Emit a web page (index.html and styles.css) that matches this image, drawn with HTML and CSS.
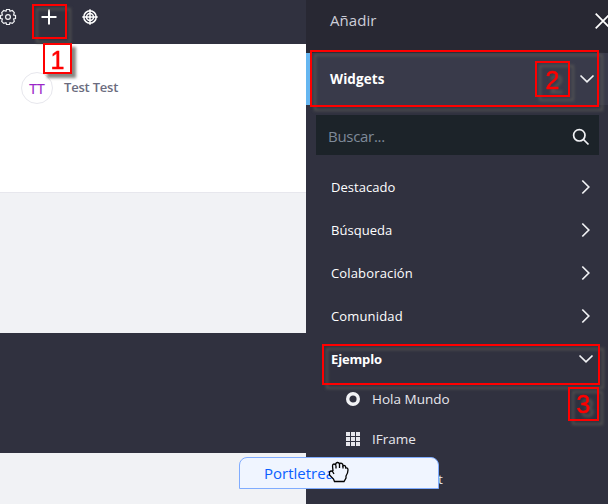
FILE: index.html
```html
<!DOCTYPE html>
<html lang="es">
<head>
<meta charset="utf-8">
<title>Añadir</title>
<link rel="stylesheet" href="styles.css">
</head>
<body>
<div class="app">
  <main class="page">
    <nav class="topbar">
      <svg class="gear" width="18" height="18" viewBox="0 0 18 18"><path d="M7.500 1.500H10.500L11 3.200L13.300 2.500L15.300 4.700L14.600 7L16.500 7.500V10.500L14.600 11L15.300 13.300L13.300 15.300L11 14.700L10.500 16.500H7.500L7 14.700L4.700 15.300L2.700 13.300L3.400 11L1.500 10.500V7.500L3.400 7L2.700 4.700L4.700 2.500L7 3.200Z"/><circle cx="9" cy="9" r="2.4"/></svg>
      <svg class="plus" width="16" height="16" viewBox="0 0 16 16"><path d="M8 .5V15.5M.5 8H15.500"/></svg>
      <svg class="target" width="16" height="16" viewBox="0 0 16 16"><circle cx="8" cy="8" r="6.200"/><circle cx="8" cy="8" r="3.500"/><path d="M8 .3V15.700M.3 8H15.700"/></svg>
    </nav>
    <section class="profile">
      <span class="avatar">TT</span>
      <span class="name">Test Test</span>
    </section>
    <section class="content"></section>
    <section class="band"></section>
    <section class="content-end"></section>
  </main>
  <aside class="sidebar">
    <header class="head"><span>Añadir</span><svg width="16" height="16" viewBox="0 0 16 16"><path d="M.7 .7L15.300 15.300M15.300 .7L.7 15.300"/></svg></header>
    <div class="widgets"><span>Widgets</span><svg width="16" height="16" viewBox="0 0 16 16"><path d="M1.500 4.500L8 10.800L14.500 4.500"/></svg></div>
    <div class="search"><span>Buscar...</span><svg width="18" height="18" viewBox="0 0 18 18"><circle cx="7.300" cy="7.300" r="5.700"/><path d="M11.500 11.500L16.500 16.500"/></svg></div>
    <ul class="cats">
      <li><span>Destacado</span><svg width="16" height="16" viewBox="0 0 16 16"><path d="M4.300 1.500L10.800 8L4.300 14.500"/></svg></li>
      <li><span>Búsqueda</span><svg width="16" height="16" viewBox="0 0 16 16"><path d="M4.300 1.500L10.800 8L4.300 14.500"/></svg></li>
      <li><span class="wide">Colaboración</span><svg width="16" height="16" viewBox="0 0 16 16"><path d="M4.300 1.500L10.800 8L4.300 14.500"/></svg></li>
      <li><span class="wide">Comunidad</span><svg width="16" height="16" viewBox="0 0 16 16"><path d="M4.300 1.500L10.800 8L4.300 14.500"/></svg></li>
      <li class="open"><span>Ejemplo</span><svg width="16" height="16" viewBox="0 0 16 16"><path d="M1.500 4.500L8 10.800L14.500 4.500"/></svg></li>
    </ul>
    <ul class="items">
      <li><svg width="14" height="14" viewBox="0 0 14 14"><circle class="ring" cx="7" cy="7" r="5.300"/></svg><span>Hola Mundo</span></li>
      <li><svg class="grid" width="14" height="14" viewBox="0 0 14 14"><path d="M0 0h4v4H0zM5 0h4v4H5zM10 0h4v4h-4zM0 5h4v4H0zM5 5h4v4H5zM10 5h4v4h-4zM0 10h4v4H0zM5 10h4v4H5zM10 10h4v4h-4z"/></svg><span>IFrame</span></li>
      <li class="last"><span>t</span></li>
    </ul>
  </aside>
  <div class="drag">Portletrea</div>
  <svg class="hand" width="22" height="22" viewBox="0 0 22 22"><path d="M5 10L4.500 5Q4.500 3 6 3Q7.300 3 7.800 4.500Q7.300 1.800 9.300 1.500Q11 1.300 11.500 3Q12 1.800 13.700 2.300Q15 2.800 15 4.800Q16 3.800 17 4.800Q17.700 5.500 17.800 7Q20 6.500 20 9Q20 12 18 15V17L16 20.500H6.500L5.500 18L1.500 14V11Q3 9.300 4.500 10.500L6 13"/><path d="M8 4.500V7.500M11.500 3V7M15 4.500V7.500"/></svg>
  <div class="mark mark-plus"></div>
  <div class="mark tag tag-one">1</div>
  <div class="mark mark-widgets"></div>
  <div class="mark tag tag-two">2</div>
  <div class="mark mark-example"></div>
  <div class="mark tag tag-three">3</div>
</div>
</body>
</html>
```

FILE: styles.css
```css
* { box-sizing: border-box; }
body { margin: 0; overflow: hidden; font-family: "Open Sans", "Noto Sans", sans-serif; }
ul { list-style: none; margin: 0; padding: 0; }
svg { display: block; fill: none; stroke: #f1f2f5; stroke-width: 1.7; flex: none; }
.app { position: relative; display: flex; width: 608px; height: 504px; overflow: hidden; background: #30313f; }
.page { width: 306px; display: flex; flex-direction: column; background: #f1f2f5; }
.topbar { height: 44px; background: #30313f; display: flex; align-items: flex-start; padding-top: 8px; }
.gear { margin-left: -1px; stroke-width: 1.2; }
.plus { margin: 1px 0 0 24px; stroke: #fff; stroke-width: 2; }
.target { margin: 1px 0 0 25px; stroke: #fff; stroke-width: 1.5; }
.profile { height: 149px; background: #fff; border-bottom: 1px solid #e7e7ed; padding: 28px 0 0 21px; display: flex; align-items: flex-start; gap: 11px; }
.avatar { width: 32px; height: 32px; border: 1px solid #e7e7ed; border-radius: 50%; color: #9a24c8; font-size: 14px; -webkit-text-stroke: .2px #9a24c8; line-height: 32px; text-align: center; }
.name { color: #6b6c7e; font-size: 13px; font-weight: 600; line-height: 30px; letter-spacing: -.2px; }
.content { height: 140px; }
.band { height: 120px; background: #30313f; }
.content-end { flex: 1; }
.sidebar { width: 302px; background: #30313f; color: #fff; }
.head { height: 53px; background: #282833; color: #cdced9; font-size: 15px; letter-spacing: .05px; display: flex; justify-content: space-between; padding: 13px 0 0 24px; line-height: 15px; }
.head svg { margin-right: -3px; stroke: #fff; }
.widgets { height: 52px; background: #393a4a; border-left: 5px solid #65b6f0; display: flex; align-items: center; justify-content: space-between; padding: 0 13px 0 19px; font-size: 13.500px; font-weight: 700; letter-spacing: .1px; }
.search { height: 40px; margin: 10px 9px 0 10px; background: #1c2329; color: #7f8a99; display: flex; align-items: center; justify-content: space-between; padding: 3px 9px 0 12px; font-size: 15px; letter-spacing: -.3px; }
.search span { margin-top: -2px; }
.cats { padding: 10.500px 14px 0 25px; font-size: 13px; }
.cats li { height: 43px; display: flex; align-items: center; justify-content: space-between; letter-spacing: .05px; }
.cats .wide { letter-spacing: .15px; }
.cats .open { font-weight: 700; letter-spacing: -.15px; }
.items { padding-left: 40px; font-size: 13.500px; color: #e7e7ed; margin-top: -1.500px; }
.items li { height: 40px; display: flex; align-items: center; gap: 12px; }
.items span { margin-top: -1px; }
.items .ring { stroke-width: 3.400; }
.items .grid { fill: #e7e7ed; stroke: none; }
.items .last { padding-left: 92px; }
.drag { position: absolute; left: 239px; top: 457px; width: 200px; height: 32px; border: 1px solid #80acff; border-radius: 8px 8px 0 0; background: #f0f5ff; color: #0b5fff; font-size: 15px; line-height: 31px; padding-left: 24px; }
.hand { position: absolute; left: 328px; top: 461px; fill: #f0f5ff; stroke: #000; stroke-width: 1.3; }
.mark { position: absolute; border: 2px solid #f00; filter: drop-shadow(4px 4px 1.500px rgba(95, 95, 88, .75)); }
.mark-plus { left: 32px; top: 4px; width: 35px; height: 35px; }
.tag { color: #f00; font: 25px/29px "Liberation Sans", sans-serif; text-align: center; -webkit-text-stroke: .5px #f00; }
.tag-one { left: 43px; top: 43px; width: 29px; height: 31px; background: #fff; font-size: 25px; line-height: 30px; }
.tag-two { left: 535px; top: 61px; width: 35px; height: 36px; line-height: 34px; }
.mark-widgets { left: 310px; top: 50px; width: 289px; height: 57px; }
.mark-example { left: 322px; top: 344px; width: 278px; height: 41px; }
.tag-three { left: 568px; top: 387px; width: 31px; height: 34px; line-height: 31px; }
```
